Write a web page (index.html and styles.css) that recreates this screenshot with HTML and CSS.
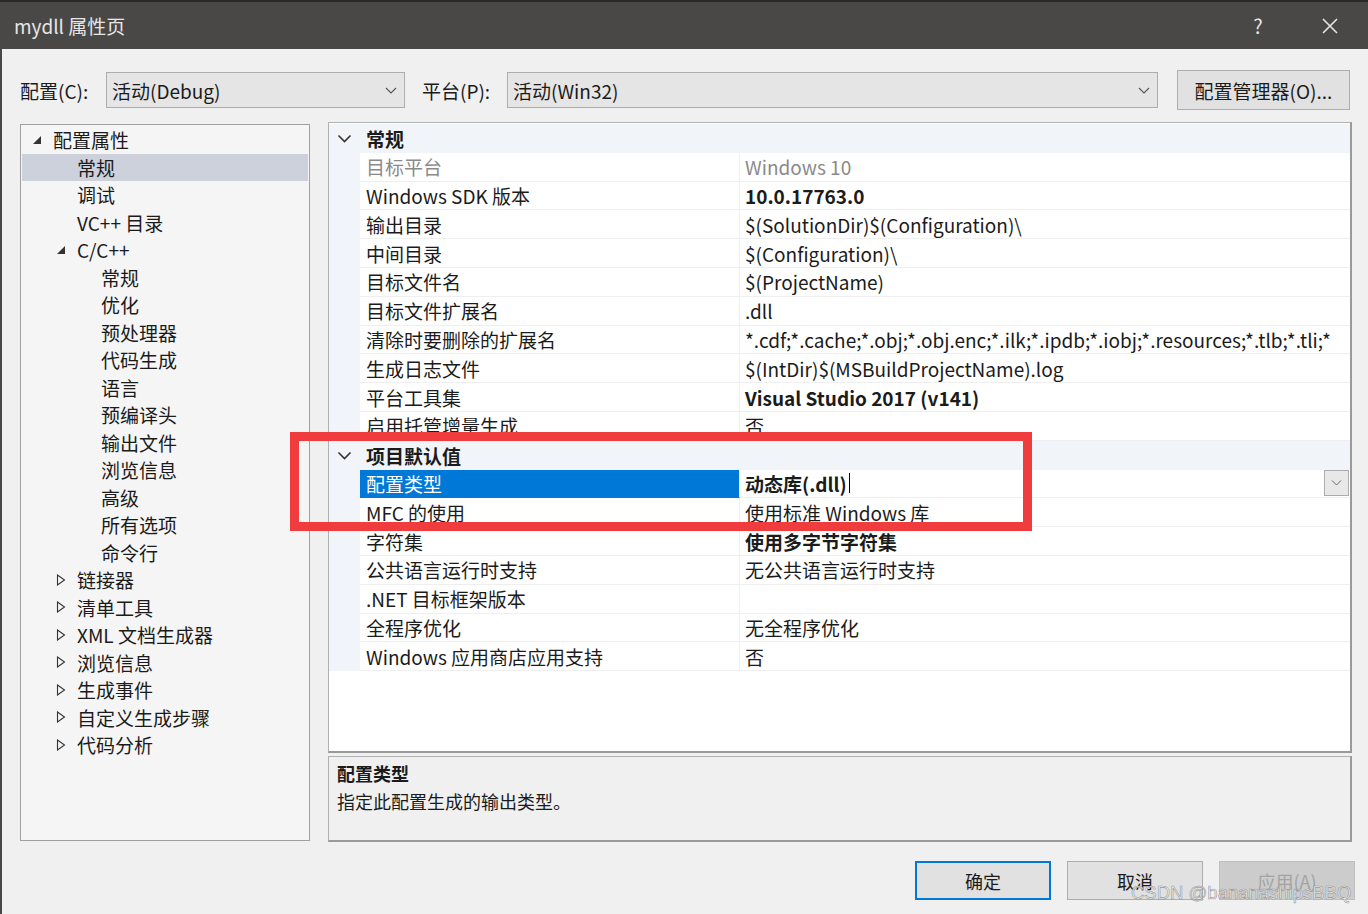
FILE: index.html
```html
<!DOCTYPE html>
<html lang="zh-CN">
<head>
    <meta charset="UTF-8">
    <title>mydll 属性页</title>
    <link rel="stylesheet" href="styles.css">
</head>
<body>
<div class="window">
    <div class="titlebar">
        <span class="title">mydll 属性页</span>
        <div class="title-btn">?</div>
        <div class="title-btn">
            <svg width="16" height="16" viewBox="0 0 16 16"><path d="M1 1L15 15M15 1L1 15" stroke="#e6e6e6" stroke-width="1.6" fill="none"/></svg>
        </div>
    </div>

    <div class="content">
        <div class="toolbar">
            <span class="tb-label">配置(C):</span>
            <div class="combo combo-config">
                <span>活动(Debug)</span>
                <svg class="chev" width="12" height="7" viewBox="0 0 12 7"><path d="M1 1L6 6L11 1" stroke="#555" stroke-width="1.1" fill="none"/></svg>
            </div>
            <span class="tb-label tb-label-platform">平台(P):</span>
            <div class="combo combo-platform">
                <span>活动(Win32)</span>
                <svg class="chev" width="12" height="7" viewBox="0 0 12 7"><path d="M1 1L6 6L11 1" stroke="#555" stroke-width="1.1" fill="none"/></svg>
            </div>
            <button class="btn-manager">配置管理器(O)...</button>
        </div>

        <div class="main">
            <div class="tree">
                <div class="node lv0"><span class="exp"><svg width="10" height="10" viewBox="0 0 10 10"><path d="M9 1V9H1Z" fill="#333"/></svg></span>配置属性</div>
                <div class="node lv1 selected"><span class="exp"></span>常规</div>
                <div class="node lv1"><span class="exp"></span>调试</div>
                <div class="node lv1"><span class="exp"></span>VC++ 目录</div>
                <div class="node lv1"><span class="exp"><svg width="10" height="10" viewBox="0 0 10 10"><path d="M9 1V9H1Z" fill="#333"/></svg></span>C/C++</div>
                <div class="node lv2"><span class="exp"></span>常规</div>
                <div class="node lv2"><span class="exp"></span>优化</div>
                <div class="node lv2"><span class="exp"></span>预处理器</div>
                <div class="node lv2"><span class="exp"></span>代码生成</div>
                <div class="node lv2"><span class="exp"></span>语言</div>
                <div class="node lv2"><span class="exp"></span>预编译头</div>
                <div class="node lv2"><span class="exp"></span>输出文件</div>
                <div class="node lv2"><span class="exp"></span>浏览信息</div>
                <div class="node lv2"><span class="exp"></span>高级</div>
                <div class="node lv2"><span class="exp"></span>所有选项</div>
                <div class="node lv2"><span class="exp"></span>命令行</div>
                <div class="node lv1"><span class="exp"><svg width="10" height="12" viewBox="0 0 10 12"><path d="M1.5 1V11L8.5 6Z" stroke="#333" stroke-width="1.1" fill="none"/></svg></span>链接器</div>
                <div class="node lv1"><span class="exp"><svg width="10" height="12" viewBox="0 0 10 12"><path d="M1.5 1V11L8.5 6Z" stroke="#333" stroke-width="1.1" fill="none"/></svg></span>清单工具</div>
                <div class="node lv1"><span class="exp"><svg width="10" height="12" viewBox="0 0 10 12"><path d="M1.5 1V11L8.5 6Z" stroke="#333" stroke-width="1.1" fill="none"/></svg></span>XML 文档生成器</div>
                <div class="node lv1"><span class="exp"><svg width="10" height="12" viewBox="0 0 10 12"><path d="M1.5 1V11L8.5 6Z" stroke="#333" stroke-width="1.1" fill="none"/></svg></span>浏览信息</div>
                <div class="node lv1"><span class="exp"><svg width="10" height="12" viewBox="0 0 10 12"><path d="M1.5 1V11L8.5 6Z" stroke="#333" stroke-width="1.1" fill="none"/></svg></span>生成事件</div>
                <div class="node lv1"><span class="exp"><svg width="10" height="12" viewBox="0 0 10 12"><path d="M1.5 1V11L8.5 6Z" stroke="#333" stroke-width="1.1" fill="none"/></svg></span>自定义生成步骤</div>
                <div class="node lv1"><span class="exp"><svg width="10" height="12" viewBox="0 0 10 12"><path d="M1.5 1V11L8.5 6Z" stroke="#333" stroke-width="1.1" fill="none"/></svg></span>代码分析</div>
            </div>

            <div class="right">
                <div class="grid">
                    <div class="section">
                        <span class="gutter"><svg width="15" height="9" viewBox="0 0 15 9"><path d="M1.5 1.5L7.5 7.5L13.5 1.5" stroke="#333" stroke-width="1.6" fill="none"/></svg></span>
                        <span class="section-name">常规</span>
                    </div>
                    <div class="prop"><span class="gutter"></span><span class="name dim">目标平台</span><span class="value dim">Windows 10</span></div>
                    <div class="prop"><span class="gutter"></span><span class="name">Windows SDK 版本</span><span class="value bold">10.0.17763.0</span></div>
                    <div class="prop"><span class="gutter"></span><span class="name">输出目录</span><span class="value">$(SolutionDir)$(Configuration)\</span></div>
                    <div class="prop"><span class="gutter"></span><span class="name">中间目录</span><span class="value">$(Configuration)\</span></div>
                    <div class="prop"><span class="gutter"></span><span class="name">目标文件名</span><span class="value">$(ProjectName)</span></div>
                    <div class="prop"><span class="gutter"></span><span class="name">目标文件扩展名</span><span class="value">.dll</span></div>
                    <div class="prop"><span class="gutter"></span><span class="name">清除时要删除的扩展名</span><span class="value">*.cdf;*.cache;*.obj;*.obj.enc;*.ilk;*.ipdb;*.iobj;*.resources;*.tlb;*.tli;*</span></div>
                    <div class="prop"><span class="gutter"></span><span class="name">生成日志文件</span><span class="value">$(IntDir)$(MSBuildProjectName).log</span></div>
                    <div class="prop"><span class="gutter"></span><span class="name">平台工具集</span><span class="value bold">Visual Studio 2017 (v141)</span></div>
                    <div class="prop"><span class="gutter"></span><span class="name">启用托管增量生成</span><span class="value">否</span></div>
                    <div class="section">
                        <span class="gutter"><svg width="15" height="9" viewBox="0 0 15 9"><path d="M1.5 1.5L7.5 7.5L13.5 1.5" stroke="#333" stroke-width="1.6" fill="none"/></svg></span>
                        <span class="section-name">项目默认值</span>
                    </div>
                    <div class="prop active"><span class="gutter"></span><span class="name">配置类型</span><span class="value bold"><span class="edit">动态库(.dll)<span class="caret"></span></span><span class="drop"><svg width="11" height="6" viewBox="0 0 11 6"><path d="M1 0.5L5.5 5L10 0.5" stroke="#666" stroke-width="1" fill="none"/></svg></span></span></div>
                    <div class="prop"><span class="gutter"></span><span class="name">MFC 的使用</span><span class="value">使用标准 Windows 库</span></div>
                    <div class="prop"><span class="gutter"></span><span class="name">字符集</span><span class="value bold">使用多字节字符集</span></div>
                    <div class="prop"><span class="gutter"></span><span class="name">公共语言运行时支持</span><span class="value">无公共语言运行时支持</span></div>
                    <div class="prop"><span class="gutter"></span><span class="name">.NET 目标框架版本</span><span class="value"></span></div>
                    <div class="prop"><span class="gutter"></span><span class="name">全程序优化</span><span class="value">无全程序优化</span></div>
                    <div class="prop"><span class="gutter"></span><span class="name">Windows 应用商店应用支持</span><span class="value">否</span></div>
                </div>
                <div class="desc">
                    <div class="desc-title">配置类型</div>
                    <div class="desc-text">指定此配置生成的输出类型。</div>
                </div>
            </div>
        </div>

        <div class="footer">
            <button class="btn btn-default">确定</button>
            <button class="btn">取消</button>
            <button class="btn btn-disabled">应用(A)</button>
        </div>
    </div>

    <div class="mark-box"></div>
    <div class="watermark">CSDN @bananashipsBBQ</div>
</div>
</body>
</html>
```

FILE: styles.css
```css
body {
    margin: 0;
    font-family: "Noto Sans CJK SC", sans-serif;
    font-size: 19px;
    color: #1b1b1b;
}
.window {
    position: relative;
    width: 1368px;
    height: 914px;
    background: #f0f0f0;
    overflow: hidden;
    display: flex;
    flex-direction: column;
}
.titlebar {
    height: 49px;
    box-sizing: border-box;
    border-top: 2px solid #2a2928;
    background: #4a4846;
    color: #e6e6e6;
    display: flex;
    align-items: center;
    padding-left: 14px;
    padding-right: 2px;
}
.title {
    flex: 1;
    font-size: 19px;
}
.title-btn {
    width: 72px;
    display: flex;
    justify-content: center;
    align-items: center;
    font-size: 20px;
}
.content {
    flex: 1;
    border-left: 2px solid #4a4846;
    padding: 21px 13px 0 18px;
    display: flex;
    flex-direction: column;
}

/* toolbar */
.toolbar {
    height: 40px;
    display: flex;
    align-items: center;
}
.tb-label {
    width: 86px;
}
.tb-label-platform {
    margin-left: 17px;
    width: 85px;
}
.combo {
    height: 36px;
    box-sizing: border-box;
    border: 1px solid #adadad;
    background: #e5e5e5;
    display: flex;
    align-items: center;
    justify-content: space-between;
    padding: 0 7px 0 5px;
}
.combo-config {
    width: 299px;
}
.combo-platform {
    width: 651px;
}
.btn-manager {
    margin-left: 19px;
    width: 173px;
    height: 40px;
    font: inherit;
    color: inherit;
    background: #e1e1e1;
    border: 1px solid #adadad;
}

/* main area */
.main {
    margin-top: 12px;
    height: 720px;
    display: flex;
}
.tree {
    width: 290px;
    height: 717px;
    margin-top: 2px;
    box-sizing: border-box;
    border: 1px solid #a0a0a0;
    background: #f5f5f5;
    padding: 1px 1px 0;
}
.node {
    height: 27.5px;
    display: flex;
    align-items: center;
    white-space: nowrap;
}
.node.lv0 { padding-left: 10px; }
.node.lv1 { padding-left: 34px; }
.node.lv2 { padding-left: 58px; }
.node.selected {
    background: #cdd1dc;
}
.exp {
    width: 21px;
    display: flex;
    align-items: center;
}
.right {
    margin-left: 18px;
    width: 1024px;
    display: flex;
    flex-direction: column;
}
.grid {
    height: 631px;
    box-sizing: border-box;
    border: 1px solid #b0b0b0;
    border-right: 2px solid #9a9a9a;
    border-bottom: 2px solid #9a9a9a;
    background: #fff;
    padding-top: 1px;
    overflow: hidden;
}
.section, .prop {
    height: 28.8px;
    display: flex;
    white-space: nowrap;
}
.section {
    background: #f1f5fa;
    align-items: center;
    font-weight: bold;
}
.gutter {
    width: 31px;
    flex: none;
    align-self: stretch;
    display: flex;
    align-items: center;
    justify-content: center;
    background: #f1f5fa;
}
.section-name {
    padding-left: 6px;
}
.name, .value {
    box-sizing: border-box;
    border-bottom: 1px solid #efefef;
    display: flex;
    align-items: center;
    overflow: hidden;
}
.name {
    width: 380px;
    flex: none;
    padding-left: 6px;
    border-right: 1px solid #efefef;
}
.value {
    flex: 1;
    padding-left: 5px;
}
.dim {
    color: #8a8a8a;
}
.bold {
    font-weight: bold;
}
.prop.active .name {
    background: #0078d7;
    color: #fff;
    border-bottom-color: #0078d7;
}
.edit {
    flex: 1;
    display: flex;
    align-items: center;
}
.caret {
    width: 1px;
    height: 20px;
    background: #000;
    margin-left: 2px;
}
.drop {
    width: 25px;
    height: 26px;
    box-sizing: border-box;
    border: 1px solid #acacac;
    background: #e8e8e8;
    display: flex;
    align-items: center;
    justify-content: center;
    margin-right: 1px;
}
.desc {
    margin-top: 3px;
    height: 86px;
    box-sizing: border-box;
    border: 1px solid #b0b0b0;
    border-right: 2px solid #9a9a9a;
    border-bottom: 2px solid #9a9a9a;
    padding: 2px 8px 0;
    font-size: 18px;
}
.desc-title {
    font-weight: bold;
    line-height: 28px;
}
.desc-text {
    line-height: 28px;
}

/* footer buttons */
.footer {
    margin-top: 19px;
    display: flex;
    justify-content: flex-end;
    gap: 16px;
}
.btn {
    width: 136px;
    height: 39px;
    font: inherit;
    font-size: 18px;
    color: #1b1b1b;
    background: #e1e1e1;
    border: 1px solid #adadad;
}
.btn-default {
    border: 2px solid #0078d7;
}
.btn-disabled {
    background: #cccccc;
    border-color: #bfbfbf;
    color: #a3a3a3;
}

/* annotation overlays */
.mark-box {
    position: absolute;
    left: 290px;
    top: 432px;
    width: 742px;
    height: 99px;
    box-sizing: border-box;
    border: 9px solid #f03c3c;
}
.watermark {
    position: absolute;
    left: 1131px;
    top: 882px;
    font-family: "Liberation Sans", sans-serif;
    font-size: 18.5px;
    color: rgba(240, 240, 240, 0.85);
    -webkit-text-stroke: 0.6px rgba(130, 130, 130, 0.8);
    white-space: nowrap;
}
```
